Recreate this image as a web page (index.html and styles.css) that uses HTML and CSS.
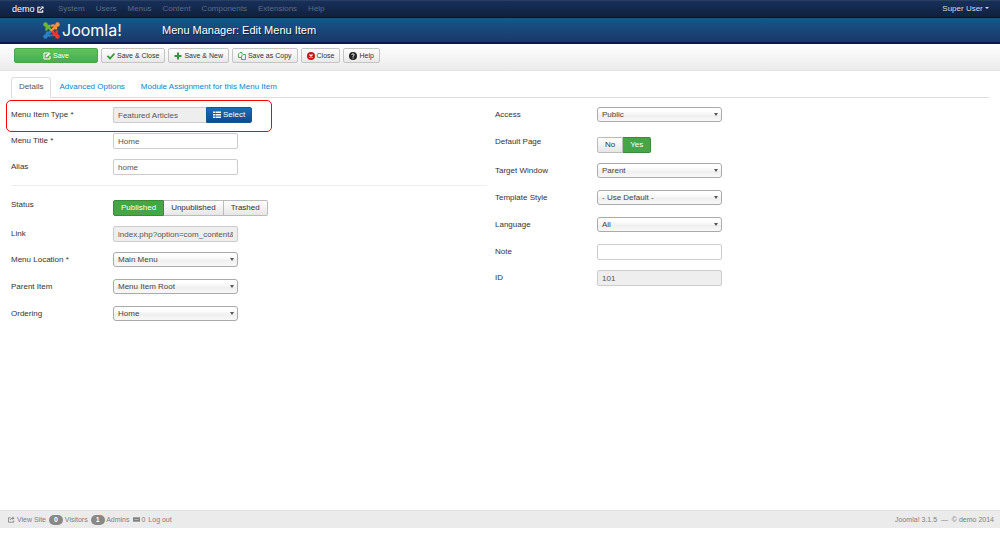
FILE: index.html
```html
<!DOCTYPE html>
<html lang="en">
<head>
<meta charset="utf-8">
<title>Menu Manager: Edit Menu Item</title>
<link rel="stylesheet" href="styles.css">
</head>
<body>
<nav class="navbar">
  <a class="brand" href="#">demo
    <svg class="icon-xs" viewBox="0 0 16 16" fill="none" stroke="currentColor" stroke-width="2.4"><path d="M8 3H2v11h11V9"/><path d="M6 10l7-7"/><path d="M9 1h6v6z" fill="currentColor" stroke="none"/></svg></a>
  <ul class="menu">
    <li><a href="#">System</a></li>
    <li><a href="#">Users</a></li>
    <li><a href="#">Menus</a></li>
    <li><a href="#">Content</a></li>
    <li><a href="#">Components</a></li>
    <li><a href="#">Extensions</a></li>
    <li><a href="#">Help</a></li>
  </ul>
  <a class="user" href="#">Super User <span class="caret"></span></a>
</nav>

<header class="header">
  <a class="logo" href="#">
    <svg class="logo-mark" viewBox="0 0 34 34" fill="none" stroke-width="4.6" stroke-linejoin="round">
      <path d="M6 7Q10 8 12 12L21 21" stroke="#6fb63a"/><path d="M7 17Q6 11 11 8L15 8" stroke="#6fb63a"/>
      <path d="M27 7Q26 10 22 12L13 21" stroke="#f9943b"/><path d="M16 8Q22 5 26 10L26 15" stroke="#f9943b"/>
      <path d="M28 28Q24 26 22 23L18 18" stroke="#ee3b2b"/><path d="M27 17Q29 22 24 26L19 26" stroke="#ee3b2b"/>
      <path d="M6 28Q8 25 12 22L16 18" stroke="#2f7fc8"/><path d="M18 26Q12 29 8 25L8 19" stroke="#2f7fc8"/>
      <circle cx="5" cy="5" r="4.4" fill="#6fb63a"/><circle cx="29" cy="5" r="4.400" fill="#f9943b"/><circle cx="29" cy="29" r="4.400" fill="#ee3b2b"/><circle cx="5" cy="29" r="4.400" fill="#2f7fc8"/>
    </svg>
    <span class="logo-text">Joomla!</span>
  </a>
  <h1 class="page-title">Menu Manager: Edit Menu Item</h1>
</header>

<div class="toolbar">
  <button type="button" class="btn btn-save"><svg class="icon" viewBox="0 0 16 16" fill="none" stroke="currentColor" stroke-width="2"><path d="M12 2H2v12h12V8"/><path d="M5 11l1-4 7-6 2 2-7 7z" fill="currentColor" stroke="none"/></svg>Save</button>
  <button type="button" class="btn"><svg class="icon green" viewBox="0 0 16 16" fill="none" stroke="currentColor" stroke-width="3.6"><path d="M1 8l5 5 9-10"/></svg>Save &amp; Close</button>
  <button type="button" class="btn"><svg class="icon green" viewBox="0 0 16 16" fill="none" stroke="currentColor" stroke-width="4"><path d="M8 1v14M1 8h14"/></svg>Save &amp; New</button>
  <button type="button" class="btn"><svg class="icon green" viewBox="0 0 16 16" fill="none" stroke="currentColor" stroke-width="1.6"><path d="M6 11H1V4l3-3h4v4"/><path d="M7 15V8l3-3h5v10z"/></svg>Save as Copy</button>
  <button type="button" class="btn"><svg class="icon red" viewBox="0 0 16 16"><circle cx="8" cy="8" r="8" fill="currentColor"/><path d="M5 5l6 6M11 5l-6 6" stroke="#fff" stroke-width="2.4"/></svg>Close</button>
  <button type="button" class="btn"><svg class="icon" viewBox="0 0 16 16"><circle cx="8" cy="8" r="8" fill="#222"/><path d="M5.500 6Q5.500 3.500 8 3.500T10.500 6Q10.500 7 8 8.500V10M8 11v2.200" fill="none" stroke="#fff" stroke-width="1.800"/></svg>Help</button>
</div>

<main class="content">
  <ul class="tabs">
    <li><a class="tab active" href="#details">Details</a></li>
    <li><a class="tab" href="#advanced">Advanced Options</a></li>
    <li><a class="tab" href="#modules">Module Assignment for this Menu Item</a></li>
  </ul>

  <form class="columns" id="details">
    <div class="column">
      <div class="row highlighted">
        <label class="label" for="type">Menu Item Type *</label>
        <div class="input-append">
          <input class="field readonly" id="type" type="text" value="Featured Articles" readonly>
          <button type="button" class="btn btn-primary"><svg class="icon" viewBox="0 0 16 14" fill="currentColor"><path d="M0 0h4v3H0zM5 0h11v3H5zM0 5h4v3H0zM5 5h11v3H5zM0 10h4v3H0zM5 10h11v3H5z"/></svg>Select</button>
        </div>
      </div>
      <div class="row">
        <label class="label" for="title">Menu Title *</label>
        <input class="field" id="title" type="text" value="Home">
      </div>
      <div class="row">
        <label class="label" for="alias">Alias</label>
        <input class="field" id="alias" type="text" value="home">
      </div>
      <hr class="rule">
      <div class="row" role="radiogroup" aria-labelledby="status-label">
        <span class="label" id="status-label">Status</span>
        <div class="btn-group">
          <label class="option"><input type="radio" name="status" checked><span>Published</span></label>
          <label class="option"><input type="radio" name="status"><span>Unpublished</span></label>
          <label class="option"><input type="radio" name="status"><span>Trashed</span></label>
        </div>
      </div>
      <div class="row">
        <label class="label" for="link">Link</label>
        <input class="field readonly" id="link" type="text" value="index.php?option=com_content&amp;view=featured" readonly>
      </div>
      <div class="row row-select">
        <label class="label" for="location">Menu Location *</label>
        <div class="select"><select id="location"><option>Main Menu</option></select></div>
      </div>
      <div class="row row-select">
        <label class="label" for="parent">Parent Item</label>
        <div class="select"><select id="parent"><option>Menu Item Root</option></select></div>
      </div>
      <div class="row row-select">
        <label class="label" for="ordering">Ordering</label>
        <div class="select"><select id="ordering"><option>Home</option></select></div>
      </div>
    </div>

    <div class="column">
      <div class="row row-select">
        <label class="label" for="access">Access</label>
        <div class="select"><select id="access"><option>Public</option></select></div>
      </div>
      <div class="row" role="radiogroup" aria-labelledby="default-label">
        <span class="label" id="default-label">Default Page</span>
        <div class="btn-group">
          <label class="option"><input type="radio" name="default"><span>No</span></label>
          <label class="option"><input type="radio" name="default" checked><span>Yes</span></label>
        </div>
      </div>
      <div class="row row-select">
        <label class="label" for="target">Target Window</label>
        <div class="select"><select id="target"><option>Parent</option></select></div>
      </div>
      <div class="row row-select">
        <label class="label" for="template">Template Style</label>
        <div class="select"><select id="template"><option>- Use Default -</option></select></div>
      </div>
      <div class="row row-select">
        <label class="label" for="language">Language</label>
        <div class="select"><select id="language"><option>All</option></select></div>
      </div>
      <div class="row">
        <label class="label" for="note">Note</label>
        <input class="field" id="note" type="text">
      </div>
      <div class="row">
        <label class="label" for="id">ID</label>
        <input class="field readonly" id="id" type="text" value="101" readonly>
      </div>
    </div>
  </form>
</main>

<footer class="status">
  <a href="#"><svg class="icon-xs" viewBox="0 0 16 16" fill="none" stroke="currentColor" stroke-width="2"><path d="M6 4H1v10h12v-4"/><path d="M5 9q1-4 6-4"/><path d="M10 1l5 4-5 4z" fill="currentColor" stroke="none"/></svg> View Site</a>
  <span><span class="badge">0</span> Visitors</span>
  <span><span class="badge">1</span> Admins</span>
  <a href="#"><svg class="icon-xs" viewBox="0 0 16 16"><path d="M0 3h16v10H0z" fill="currentColor"/><path d="M3 8h10" stroke="#ccc" stroke-width="1.500"/></svg> 0</a>
  <a href="#">Log out</a>
  <span class="copyright">Joomla! 3.1.5 &nbsp;—&nbsp; © demo 2014</span>
</footer>
</body>
</html>
```
FILE: styles.css
```css
*, *::before, *::after { box-sizing: border-box; }

body {
  margin: 0;
  min-height: 100vh;
  padding-bottom: 17px;
  display: flex;
  flex-direction: column;
  background: #fff;
  color: #333;
  font: 8px/10px "Liberation Sans", Arial, sans-serif;
}

a { color: inherit; text-decoration: none; }
ul { list-style: none; margin: 0; padding: 0; }
input, select, button { font: inherit; color: inherit; margin: 0; }

.icon { width: 8px; height: 8px; flex: none; }
.icon-xs { width: 7px; height: 7px; vertical-align: -1px; }
.green { color: #2f9a35; }
.red { color: #c41818; }

.navbar {
  display: flex;
  align-items: center;
  height: 18px;
  padding: 0 11px 0 12px;
  background: linear-gradient(#17305a, #11203d);
  border-top: 1px solid #2a4063;
  border-bottom: 1px solid #0b1526;
  color: #5d6c86;
}
.brand { width: 46px; color: #fff; font-size: 9px; white-space: nowrap; }
.menu { display: flex; gap: 11px; }
.user { margin-left: auto; color: #d5dae2; }
.caret {
  display: inline-block;
  vertical-align: 2px;
  border: 2px solid transparent;
  border-top-color: currentColor;
  border-bottom: 0;
}

.header {
  display: flex;
  align-items: center;
  height: 26px;
  padding-left: 43px;
  background: linear-gradient(#17568c, #1a3867);
  border-bottom: 2px solid #10164f;
  color: #fff;
}
.logo { display: flex; align-items: center; gap: 2px; width: 119px; }
.logo-mark { width: 17px; height: 17px; }
.logo-text { font: 16px/20px Inter, sans-serif; }
.page-title { margin: 0; font-size: 11px; line-height: 16px; font-weight: normal; text-shadow: 1px 1px 1px #0008; }

.toolbar {
  display: flex;
  align-items: center;
  gap: 3px;
  height: 27px;
  padding: 1px 14px 4px;
  background: linear-gradient(#fff, #ebebeb);
  border-bottom: 1px solid #e4e4e4;
}
.btn {
  display: flex;
  align-items: center;
  justify-content: center;
  gap: 2px;
  height: 15px;
  padding: 0 5px;
  border: 1px solid #c4c4c4;
  border-radius: 2px;
  background: linear-gradient(#fff, #e8e8e8);
  white-space: nowrap;
}
.toolbar .btn { font-size: 7px; }
.toolbar .btn-save {
  width: 84px;
  border-color: #4aa64a;
  background: linear-gradient(#5fc25f, #4cab4c);
  color: #fff;
}
.btn-primary {
  height: 16px;
  width: 46px;
  padding: 0;
  border-color: #14559c;
  border-radius: 0 2px 2px 0;
  background: linear-gradient(#1a6dbd, #104a8c);
  color: #fff;
}

.content { flex: 1; padding: 6px 11px; }
.tabs { display: flex; border-bottom: 1px solid #ddd; margin-bottom: 9px; }
.tab {
  display: block;
  height: 20px;
  padding: 4px 7px;
  border: 1px solid transparent;
  border-bottom: 0;
  color: #08c;
}
.tab.active {
  margin-bottom: -1px;
  height: 21px;
  border-color: #ddd;
  border-radius: 3px 3px 0 0;
  background: #fff;
  color: #555;
}

.columns { display: grid; grid-template-columns: 476fr 494fr; gap: 8px; }
.row { display: flex; align-items: flex-start; margin-bottom: 10px; }
.row-select { margin-bottom: 12px; }
.label { width: 102px; height: 13px; padding-top: 3px; flex: none; }
.highlighted { position: relative; }
.highlighted::before {
  content: "";
  position: absolute;
  top: -7px;
  left: -5px;
  width: 266px;
  height: 32px;
  border: 1px solid #f00;
  border-radius: 5px;
  pointer-events: none;
}
.rule { margin: 0 0 11px; border: 0; border-top: 1px solid #eee; }

.field {
  width: 125px;
  height: 16px;
  padding: 0 4px;
  border: 1px solid #ccc;
  border-radius: 2px;
  background: #fff;
  color: #555;
}
.readonly { background: #eee; }
.input-append { display: flex; }
.input-append .field { width: 93px; border-right: 0; border-radius: 2px 0 0 2px; }

.select { position: relative; width: 125px; }
.select select {
  display: block;
  appearance: none;
  width: 100%;
  height: 15px;
  padding: 0 4px;
  border: 1px solid #aaa;
  border-radius: 3px;
  background: linear-gradient(#fff 20%, #f4f4f4 50%, #eee 52%, #f8f8f8);
  color: #444;
}
.select::after {
  content: "";
  position: absolute;
  top: 6px;
  right: 4px;
  border: 2px solid transparent;
  border-top: 3px solid #555;
  border-bottom: 0;
  pointer-events: none;
}

.btn-group { display: flex; padding-top: 3px; }
.option { position: relative; }
.option input { position: absolute; opacity: 0; }
.option span {
  display: block;
  height: 16px;
  padding: 2px 7px;
  border: 1px solid #bbb;
  border-left-width: 0;
  background: linear-gradient(#fff, #e6e6e6);
}
.option:first-child span { border-left-width: 1px; border-radius: 2px 0 0 2px; }
.option:last-child span { border-radius: 0 2px 2px 0; }
.option input:checked + span { border-color: #3c893c; background: #46a546; color: #fff; }

.status {
  display: flex;
  align-items: center;
  gap: 3px;
  height: 18px;
  padding: 0 6px 0 8px;
  background: #ebebeb;
  border-top: 1px solid #e2e2e2;
  color: #808080;
  font-size: 7px;
}
.badge {
  display: inline-block;
  padding: 0 5px;
  border-radius: 5px;
  background: #888;
  color: #fff;
  font-weight: bold;
}
.copyright { margin-left: auto; }
```
